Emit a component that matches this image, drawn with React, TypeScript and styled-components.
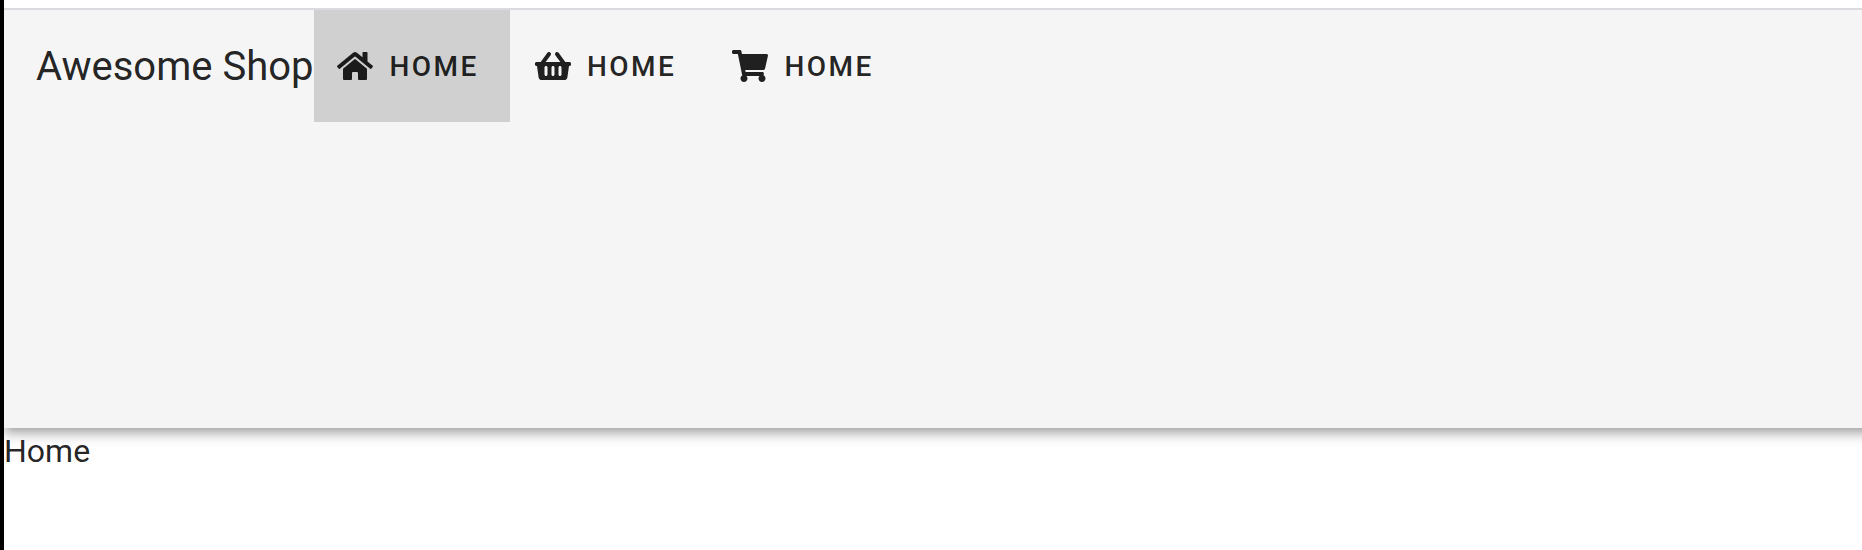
import React from 'react';
import styled, { createGlobalStyle } from 'styled-components';
import { FaHome, FaShoppingBasket, FaShoppingCart } from 'react-icons/fa';

const GlobalStyle = createGlobalStyle`
  * { box-sizing: border-box; }
  body {
    margin: 0;
    background: #fff;
    color: rgba(0, 0, 0, 0.87);
    font-family: Roboto, sans-serif;
    overflow: hidden;
    -webkit-font-smoothing: antialiased;
  }
`;

const Frame = styled.div`
  display: flex;
  flex-direction: column;
  height: 100vh;
  border-left: 4px solid #000;
  padding-top: 8px;
`;

const Viewport = styled.div`
  flex: 1;
  border-top: 2px solid #dadadf;
  overflow: hidden;
`;

const Toolbar = styled.header`
  height: 418px;
  margin-right: -32px;
  padding-left: 32px;
  background: #f5f5f5;
  box-shadow:
    0 4px 8px -2px rgba(0, 0, 0, 0.2),
    0 8px 10px 0 rgba(0, 0, 0, 0.14),
    0 2px 20px 0 rgba(0, 0, 0, 0.12);
`;

const ToolbarContent = styled.nav`
  display: flex;
  align-items: center;
  height: 112px;
`;

const Title = styled.div`
  padding-top: 2px;
  font-size: 40px;
  line-height: 60px;
  white-space: nowrap;
`;

const NavButton = styled.button<{ $active?: boolean }>`
  display: flex;
  align-items: center;
  flex: none;
  gap: 16px;
  height: 112px;
  padding: 0 31px 0 23px;
  border: solid transparent;
  border-width: 0 1px;
  background-color: ${({ $active }) => ($active ? '#d0d0d0' : 'transparent')};
  background-clip: padding-box;
  color: rgba(0, 0, 0, 0.87);
  font: 500 28px Roboto, sans-serif;
  letter-spacing: 0.0892857143em;
  text-transform: uppercase;

  svg {
    width: 36px;
    height: 32px;
  }
`;

const Content = styled.main`
  font-size: 32px;
  line-height: 46px;
`;

const links = [
  { id: 'home', label: 'Home', Icon: FaHome },
  { id: 'shop', label: 'Home', Icon: FaShoppingBasket },
  { id: 'cart', label: 'Home', Icon: FaShoppingCart },
];

export default function App() {
  return (
    <Frame>
      <GlobalStyle />
      <Viewport>
        <Toolbar>
          <ToolbarContent>
            <Title>Awesome Shop</Title>
            {links.map(({ id, label, Icon }) => (
              <NavButton key={id} $active={id === 'home'}>
                <Icon />
                <span>{label}</span>
              </NavButton>
            ))}
          </ToolbarContent>
        </Toolbar>
        <Content>Home</Content>
      </Viewport>
    </Frame>
  );
}
